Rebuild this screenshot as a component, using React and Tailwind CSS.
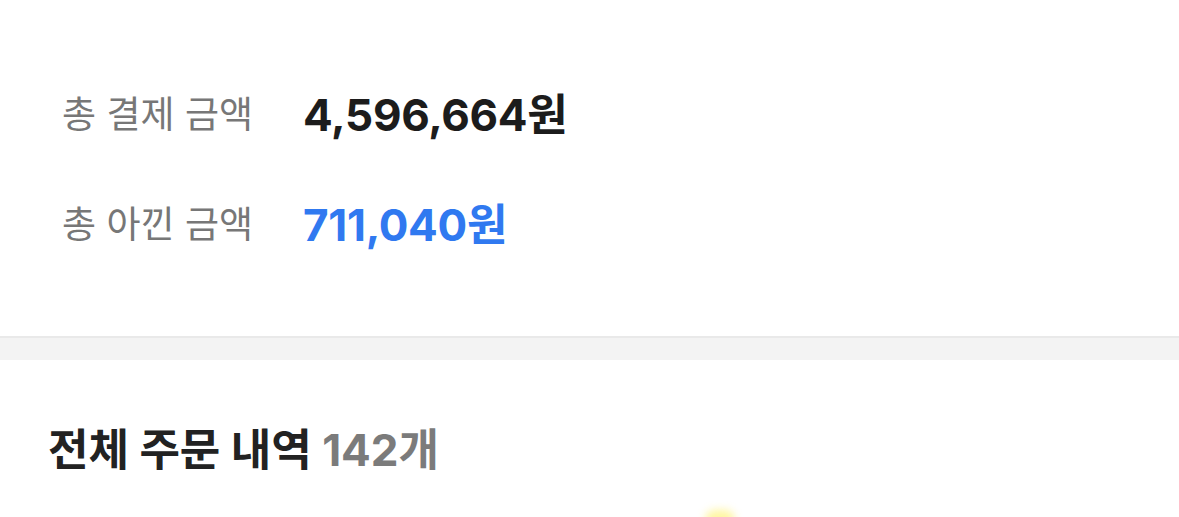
import React from 'react';

const SummaryRow = ({ label, value, valueClass }) => (
  <div className="flex items-center h-[110px]">
    <span className="w-[241px] text-[37px] text-[#777777]">{label}</span>
    <span className={`text-[44px] font-bold tracking-[-0.3px] ${valueClass}`}>{value}</span>
  </div>
);

const App = () => {
  return (
    <div
      className="w-[1179px] h-[517px] bg-white overflow-hidden"
      style={{ fontFamily: 'Inter, "Noto Sans CJK KR", "Noto Sans", sans-serif' }}
    >
      {/* 결제 요약 */}
      <section className="pl-[62px] pt-[60px] h-[336px]">
        <SummaryRow label="총 결제 금액" value="4,596,664원" valueClass="text-[#1c1c1c]" />
        <SummaryRow label="총 아낀 금액" value="711,040원" valueClass="text-[#3079f0]" />
      </section>

      {/* 구분선 */}
      <div className="h-[24px] bg-[#f3f3f3] border-t-2 border-[#e9e9e9]" />

      {/* 주문 내역 */}
      <section className="relative px-[48px] pt-[68px]">
        <h2 className="text-[44px] font-bold text-[#222222] leading-none">
          전체 주문 내역 <span className="text-[#7b7b7b]">142개</span>
        </h2>
        <div className="absolute left-[705px] top-[150px] w-[30px] h-[20px] rounded-full bg-[#fff27a] blur-[4px] opacity-70" />
      </section>
    </div>
  );
};

export default App;
